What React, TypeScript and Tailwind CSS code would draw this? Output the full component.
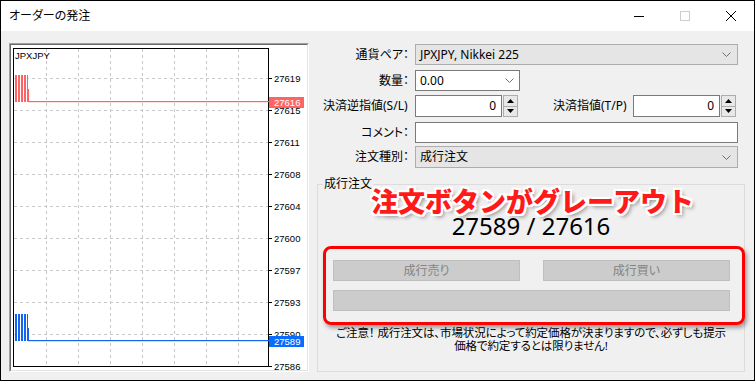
import React from "react";

const ui = "font-['Noto_Sans','Noto_Sans_CJK_JP',sans-serif] [font-feature-settings:'palt']";

const Chevron = () => (
  <svg width="9" height="5" viewBox="0 0 9 5">
    <polyline points="0.5,0.5 4.5,4.5 8.5,0.5" fill="none" stroke="#707070" strokeWidth="1" />
  </svg>
);

const Spinner = () => (
  <div className="flex flex-col w-[15px] h-[22px] border border-[#adadad] bg-[#e8e8e8]">
    <div className="flex-1 flex items-center justify-center border-b border-[#adadad]">
      <svg width="7" height="4" viewBox="0 0 7 4">
        <polygon points="3.5,0 7,4 0,4" fill="#000" />
      </svg>
    </div>
    <div className="flex-1 flex items-center justify-center">
      <svg width="7" height="4" viewBox="0 0 7 4">
        <polygon points="0,0 7,0 3.5,4" fill="#000" />
      </svg>
    </div>
  </div>
);

const vx = [35, 67, 99, 131, 163, 195, 227];
const hy = [33, 65, 97, 129, 161, 193, 225, 257, 289];
const labels: [number, string][] = [
  [33, "27619"],
  [65, "27615"],
  [97, "27611"],
  [129, "27608"],
  [161, "27604"],
  [193, "27600"],
  [225, "27597"],
  [257, "27593"],
  [289, "27590"],
  [321, "27586"],
];

const gaps = [6, 9, 12, 15];

const Bars = ({ y0, yMid, y1, color }: { y0: number; yMid: number; y1: number; color: string }) => (
  <g>
    <rect x={4} y={y0} width={13} height={yMid - y0} fill={color} />
    <rect x={4} y={yMid} width={14} height={y1 - yMid} fill={color} />
    {gaps.map((g) => (
      <rect key={g} x={g} y={y0} width={1} height={y1 - y0} fill="#ffffff" />
    ))}
  </g>
);

const F = "'Liberation Sans', Arial, sans-serif";

const Chart = () => (
  <svg width="296" height="325" viewBox="0 0 296 325" className="block">
    <rect x="0" y="0" width="296" height="325" fill="#ffffff" />
    {vx.map((x) => (
      <line key={`v${x}`} x1={x + 0.5} y1={4} x2={x + 0.5} y2={321} stroke="#c8c8c8" strokeDasharray="3 3" />
    ))}
    {hy.map((y) => (
      <line key={`h${y}`} x1={3} y1={y + 0.5} x2={257} y2={y + 0.5} stroke="#c8c8c8" strokeDasharray="3 3" />
    ))}
    <rect x="2.5" y="3.5" width="255" height="318" fill="none" stroke="#000000" />
    {labels.map(([y, t]) => (
      <g key={t}>
        <line x1={258} y1={y + 0.5} x2={261} y2={y + 0.5} stroke="#000000" />
        <text x={263} y={y + 3.5} fontSize="9.5" fontFamily={F} fill="#000000">
          {t}
        </text>
      </g>
    ))}
    <text x={4} y={14} fontSize="9.5" fontFamily={F} fill="#000000">
      JPXJPY
    </text>
    {/* red ask */}
    <Bars y0={30} yMid={44} y1={57} color="#ff6464" />
    <rect x={17} y={56} width={241} height={1.2} fill="#ff6464" />
    <rect x={258} y={52} width={35} height={11} fill="#ff6464" />
    <text x={263} y={61} fontSize="9.5" fontFamily={F} fill="#ffffff">
      27616
    </text>
    {/* blue bid */}
    <Bars y0={269} yMid={283} y1={296} color="#1464f0" />
    <rect x={17} y={295} width={241} height={1.2} fill="#1464f0" />
    <rect x={258} y={291} width={35} height={11} fill="#0a6cff" />
    <text x={263} y={300} fontSize="9.5" fontFamily={F} fill="#ffffff">
      27589
    </text>
  </svg>
);

const Label = ({ children }: { children: React.ReactNode }) => (
  <div className="w-[95px] shrink-0 text-right pr-[3px] text-[12px] leading-[16px] text-black">{children}</div>
);

export default function App() {
  return (
    <div className={`${ui} w-[755px] h-[381px] border border-black bg-[#f0f0f0] flex flex-col overflow-hidden text-black`}>
      {/* title bar */}
      <div className="h-[30px] bg-white flex items-center justify-between shrink-0">
        <div className="pl-[8px] text-[12px] leading-[16px]">オーダーの発注</div>
        <div className="flex h-full">
          <div className="w-[46px] h-full flex items-center justify-center">
            <svg width="10" height="10" viewBox="0 0 10 10">
              <line x1="0" y1="5.5" x2="10" y2="5.5" stroke="#000" />
            </svg>
          </div>
          <div className="w-[46px] h-full flex items-center justify-center">
            <svg width="10" height="10" viewBox="0 0 10 10">
              <rect x="0.5" y="0.5" width="9" height="9" fill="none" stroke="#cccccc" />
            </svg>
          </div>
          <div className="w-[46px] h-full flex items-center justify-center">
            <svg width="10" height="10" viewBox="0 0 10 10">
              <line x1="0" y1="0" x2="10" y2="10" stroke="#000" />
              <line x1="10" y1="0" x2="0" y2="10" stroke="#000" />
            </svg>
          </div>
        </div>
      </div>

      {/* body */}
      <div className="flex items-start flex-1">
        {/* chart panel */}
        <div className="ml-[8px] mt-[12px] w-[300px] h-[329px] border border-t-[#a0a0a0] border-l-[#a0a0a0] border-r-white border-b-white">
          <div className="w-full h-full border border-t-[#696969] border-l-[#696969] border-r-[#e3e3e3] border-b-[#e3e3e3] bg-white">
            <Chart />
          </div>
        </div>

        {/* form */}
        <div className="ml-[8px] mt-[13px] w-[428px] flex flex-col">
          <div className="flex items-center">
            <Label>通貨ペア：</Label>
            <div className="ml-[3px] w-[323px] h-[21px] border border-[#adadad] bg-[#e5e5e5] flex items-center justify-between pl-[4px] pr-[6px]">
              <span className="text-[12px] leading-[16px]">JPXJPY, Nikkei 225</span>
              <Chevron />
            </div>
          </div>
          <div className="flex items-center mt-[5px]">
            <Label>数量：</Label>
            <div className="ml-[3px] w-[105px] h-[21px] border border-[#7a7a7a] bg-white flex items-center justify-between pl-[4px] pr-[5px]">
              <span className="text-[12px] leading-[16px]">0.00</span>
              <Chevron />
            </div>
          </div>
          <div className="flex items-center mt-[4px]">
            <div className="w-[95px] shrink-0 pl-[6px] text-[12px] leading-[16px] whitespace-nowrap">決済逆指値(S/L)</div>
            <div className="ml-[3px] w-[87px] h-[22px] border border-[#7a7a7a] bg-white flex items-center justify-end pr-[5px] text-[12px] leading-[16px]">0</div>
            <div className="ml-[1px]">
              <Spinner />
            </div>
            <div className="w-[115px] shrink-0 pl-[35px] text-[12px] leading-[16px] whitespace-nowrap">決済指値(T/P)</div>
            <div className="w-[87px] h-[22px] border border-[#7a7a7a] bg-white flex items-center justify-end pr-[5px] text-[12px] leading-[16px]">0</div>
            <div className="ml-[1px]">
              <Spinner />
            </div>
          </div>
          <div className="flex items-center mt-[5px]">
            <Label>コメント：</Label>
            <div className="ml-[3px] w-[323px] h-[21px] border border-[#7a7a7a] bg-white" />
          </div>
          <div className="flex items-center mt-[3px]">
            <Label>注文種別：</Label>
            <div className="ml-[3px] w-[323px] h-[22px] border border-[#adadad] bg-[#e5e5e5] flex items-center justify-between pl-[4px] pr-[6px]">
              <span className="text-[12px] leading-[16px]">成行注文</span>
              <Chevron />
            </div>
          </div>

          {/* group box */}
          <div className="relative mt-[16px] h-[188px] border border-[#dcdcdc] flex flex-col">
            <span className="absolute left-[5px] top-[-7px] px-[1px] bg-[#f0f0f0] text-[12px] leading-[12px]">成行注文</span>

            <div className="mt-[29px] text-center font-['Noto_Sans',sans-serif] text-[24px] leading-[24px] [font-feature-settings:normal]">
              27589 / 27616
            </div>

            <div className="mt-[22px] flex justify-between pl-[15px] pr-[14px]">
              <div className="w-[187px] h-[21px] bg-[#cccccc] border border-[#bfbfbf] flex items-center justify-center text-[12px] leading-[16px] text-[#838383]">成行売り</div>
              <div className="w-[187px] h-[21px] bg-[#cccccc] border border-[#bfbfbf] flex items-center justify-center text-[12px] leading-[16px] text-[#838383]">成行買い</div>
            </div>
            <div className="mt-[9px] ml-[15px] mr-[14px] h-[21px] bg-[#cccccc] border border-[#bfbfbf]" />

            <div className="mt-[16px] text-center text-[11.5px] leading-[12.5px] tracking-[-0.1px]">
              ご注意！ 成行注文は、市場状況によって約定価格が決まりますので、必ずしも提示
              <br />
              価格で約定するとは限りません!
            </div>

            {/* annotation overlays */}
            <div className="absolute left-[5px] top-[61px] w-[422px] h-[79px] rounded-[8px] border-[3px] border-[#ff0000] shadow-[2px_3px_4px_rgba(0,0,0,0.35)]" />
            <div className="absolute left-[53px] top-[2px] font-['Noto_Sans_CJK_JP',sans-serif] [font-feature-settings:normal] font-black text-[27px] leading-[27px] text-[#ff1a1a] whitespace-nowrap [text-shadow:2px_0_0_#fff,-2px_0_0_#fff,0_2px_0_#fff,0_-2px_0_#fff,2px_2px_0_#fff,-2px_-2px_0_#fff,2px_-2px_0_#fff,-2px_2px_0_#fff,3px_3px_4px_rgba(0,0,0,0.45)]">
              注文ボタンがグレーアウト
            </div>
          </div>
        </div>
      </div>
    </div>
  );
}
